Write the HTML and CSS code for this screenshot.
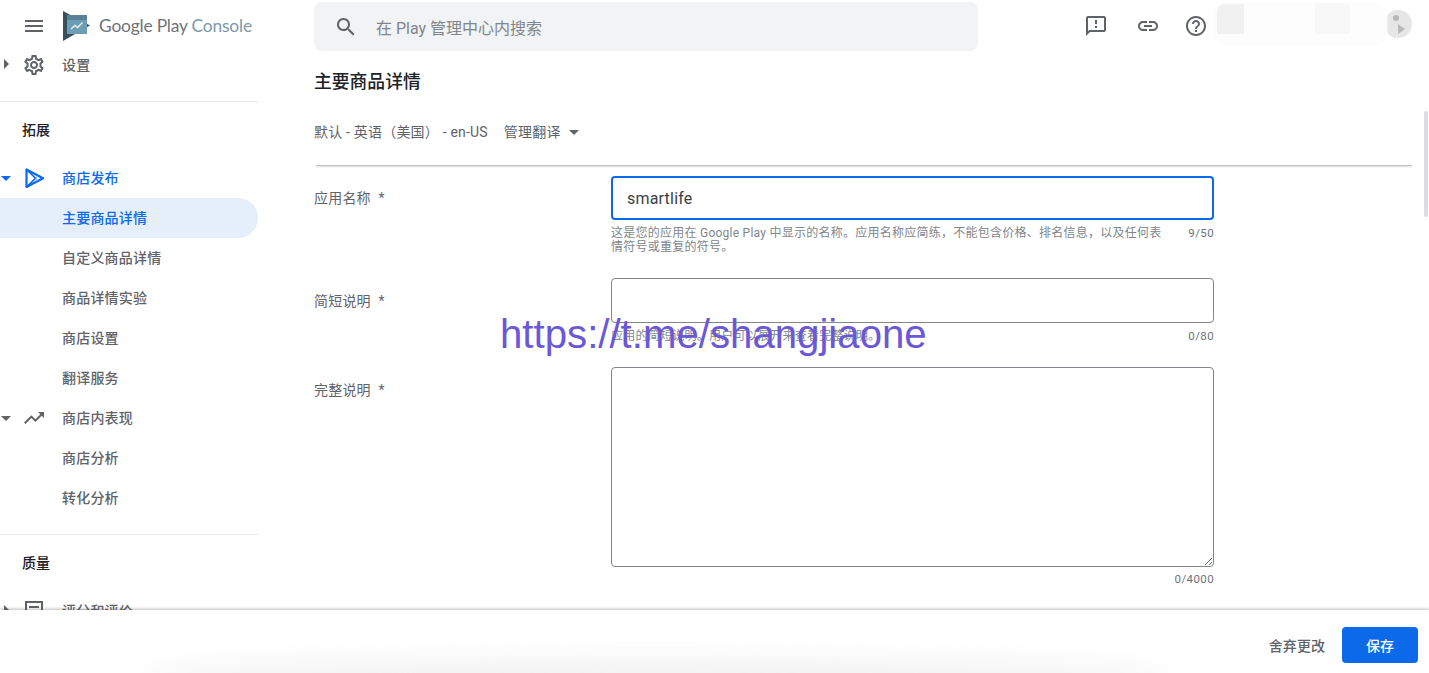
FILE: index.html
```html
<!DOCTYPE html>
<html lang="zh-CN">
<head>
<meta charset="utf-8">
<title>Google Play Console</title>
<link rel="stylesheet" href="styles.css">
</head>
<body>
<div class="app">
  <div class="workspace">
    <aside class="sidebar">
      <div class="brand">
        <svg class="menu-icon" viewBox="0 0 24 24"><path d="M3 18h18v-2H3v2zm0-5h18v-2H3v2zm0-7v2h18V6H3z"/></svg>
        <svg class="logo" viewBox="0 0 28 32"><path fill="#37505c" d="M1 1L28 15.500 1 31z"/><path fill="#6b9db5" d="M5 5h20v19H5z"/><path fill="#5a8296" d="M5 5h20v5H5z"/><path fill="none" stroke="#e8f0f4" stroke-width="1.400" d="M9 19l4-3.500 2.500 2 5-5"/></svg>
        <span class="brand-name">Google Play <span class="brand-sub">Console</span></span>
      </div>
      <nav class="nav">
        <div class="nav-row">
          <span class="caret caret-right"></span>
          <svg class="nav-icon" viewBox="0 0 24 24"><path d="M19.430 12.980c.04-.32.07-.64.07-.98 0-.34-.03-.66-.07-.98l2.110-1.650c.19-.15.24-.42.12-.64l-2-3.460c-.09-.16-.26-.25-.44-.25-.06 0-.12.01-.17.03l-2.490 1c-.52-.4-1.080-.73-1.690-.98l-.38-2.650C14.460 2.180 14.250 2 14 2h-4c-.25 0-.46.18-.49.42l-.38 2.650c-.61.25-1.170.59-1.690.98l-2.490-1c-.06-.02-.12-.03-.18-.03-.17 0-.34.09-.43.25l-2 3.460c-.13.22-.07.49.12.64l2.110 1.650c-.04.32-.07.65-.07.98 0 .33.03.66.07.98l-2.110 1.650c-.19.15-.24.42-.12.64l2 3.460c.09.16.26.25.44.25.06 0 .12-.01.17-.03l2.490-1c.52.4 1.080.73 1.690.98l.38 2.650c.03.24.24.42.49.42h4c.25 0 .46-.18.49-.42l.38-2.650c.61-.25 1.170-.59 1.690-.98l2.490 1c.06.02.12.03.18.03.17 0 .34-.09.43-.25l2-3.460c.12-.22.07-.49-.12-.64l-2.110-1.650zm-1.980-1.710c.04.31.05.52.05.73 0 .21-.02.43-.05.73l-.14 1.130.89.7 1.080.84-.7 1.210-1.270-.51-1.040-.42-.9.68c-.43.32-.84.56-1.250.73l-1.060.43-.16 1.130-.2 1.350h-1.400l-.19-1.350-.16-1.130-1.060-.43c-.43-.18-.83-.41-1.230-.71l-.91-.7-1.060.43-1.270.51-.7-1.210 1.080-.84.89-.7-.14-1.130c-.03-.31-.05-.54-.05-.74s.02-.43.05-.73l.14-1.130-.89-.7-1.080-.84.7-1.210 1.270.51 1.040.42.9-.68c.43-.32.84-.56 1.250-.73l1.060-.43.16-1.130.2-1.350h1.390l.19 1.350.16 1.130 1.060.43c.43.18.83.41 1.230.71l.91.7 1.060-.43 1.270-.51.7 1.210-1.070.85-.89.7.14 1.130zM12 8c-2.210 0-4 1.790-4 4s1.790 4 4 4 4-1.790 4-4-1.790-4-4-4zm0 6c-1.100 0-2-.9-2-2s.9-2 2-2 2 .9 2 2-.9 2-2 2z"/></svg>
          <span class="nav-label">设置</span>
        </div>
        <hr class="nav-divider">
        <div class="nav-section">拓展</div>
        <div class="nav-row nav-row-active">
          <span class="caret caret-down caret-blue"></span>
          <svg class="nav-icon-play" viewBox="0 0 30 30"><path d="M6.500 6.500V24L23 15.200z" fill="none" stroke="#0b69ea" stroke-width="2.200" stroke-linejoin="round"/><path d="M6.500 6.500L15.500 15.200 6.500 24" fill="none" stroke="#0b69ea" stroke-width="1.600"/><path d="M15.500 15.200L18 12.800M15.500 15.200L18 17.600" fill="none" stroke="#6fa5f0" stroke-width="1"/></svg>
          <span class="nav-label">商店发布</span>
        </div>
        <div class="nav-row nav-sub nav-sub-selected"><span class="nav-label">主要商品详情</span></div>
        <div class="nav-row nav-sub"><span class="nav-label">自定义商品详情</span></div>
        <div class="nav-row nav-sub"><span class="nav-label">商品详情实验</span></div>
        <div class="nav-row nav-sub"><span class="nav-label">商店设置</span></div>
        <div class="nav-row nav-sub"><span class="nav-label">翻译服务</span></div>
        <div class="nav-row">
          <span class="caret caret-down"></span>
          <svg class="nav-icon" viewBox="0 0 24 24"><path d="M16 6l2.290 2.290-4.880 4.880-4-4L2 16.590 3.410 18l6-6 4 4 6.300-6.290L22 12V6z"/></svg>
          <span class="nav-label">商店内表现</span>
        </div>
        <div class="nav-row nav-sub"><span class="nav-label">商店分析</span></div>
        <div class="nav-row nav-sub"><span class="nav-label">转化分析</span></div>
        <hr class="nav-divider">
        <div class="nav-section">质量</div>
        <div class="nav-row">
          <span class="caret caret-right"></span>
          <svg class="nav-icon" viewBox="0 0 24 24"><path d="M21 2H3v20h18V2zm-2 18H5V4h14v16zM7 7h10v2H7zm0 4h10v2H7z"/></svg>
          <span class="nav-label">评分和评价</span>
        </div>
      </nav>
    </aside>
    <main class="main">
      <header class="topbar">
        <div class="search">
          <svg class="search-icon" viewBox="0 0 24 24"><path d="M15.500 14h-.79l-.28-.27C15.410 12.590 16 11.110 16 9.500 16 5.910 13.090 3 9.500 3S3 5.910 3 9.500 5.910 16 9.500 16c1.610 0 3.090-.59 4.230-1.570l.27.28v.79l5 4.990L20.490 19l-4.990-5zm-6 0C7.010 14 5 11.990 5 9.500S7.010 5 9.500 5 14 7.010 14 9.500 11.990 14 9.500 14z"/></svg>
          <span class="search-text">在 Play 管理中心内搜索</span>
        </div>
        <div class="top-actions">
          <svg class="top-icon" viewBox="0 0 24 24"><path d="M20 2H4c-1.100 0-1.990.9-1.990 2L2 22l4-4h14c1.100 0 2-.9 2-2V4c0-1.100-.9-2-2-2zm0 14H5.170L4 17.170V4h16v12zm-9-4h2v2h-2zm0-6h2v4h-2z"/></svg>
          <svg class="top-icon top-icon-link" viewBox="0 0 24 24"><path d="M3.900 12c0-1.710 1.390-3.100 3.100-3.100h4V7H7c-2.760 0-5 2.240-5 5s2.240 5 5 5h4v-1.900H7c-1.710 0-3.100-1.390-3.100-3.100zM8 13h8v-2H8v2zm9-6h-4v1.900h4c1.710 0 3.100 1.390 3.100 3.100s-1.390 3.100-3.100 3.100h-4V17h4c2.760 0 5-2.240 5-5s-2.240-5-5-5z"/></svg>
          <svg class="top-icon" viewBox="0 0 24 24"><path d="M11 18h2v-2h-2v2zm1-16C6.480 2 2 6.480 2 12s4.480 10 10 10 10-4.480 10-10S17.520 2 12 2zm0 18c-4.410 0-8-3.590-8-8s3.590-8 8-8 8 3.590 8 8-3.590 8-8 8zm0-14c-2.210 0-4 1.790-4 4h2c0-1.100.9-2 2-2s2 .9 2 2c0 2-3 1.750-3 5h2c0-2.250 3-2.500 3-5 0-2.210-1.790-4-4-4z"/></svg>
        </div>
      </header>
      <div class="content">
        <section class="sticky-head">
          <h1 class="page-title">主要商品详情</h1>
          <div class="lang-row">
            <span>默认 - 英语（美国） - en-US</span>
            <span class="lang-manage">管理翻译<span class="caret caret-down caret-inline"></span></span>
          </div>
        </section>
        <form class="form">
          <div class="field field-name">
            <label class="field-label">应用名称 <span class="req">*</span></label>
            <div class="field-body">
              <div class="input input-focus">smartlife</div>
              <div class="hint-row">
                <p class="hint">这是您的应用在 Google Play 中显示的名称。应用名称应简练，不能包含价格、排名信息，以及任何表情符号或重复的符号。</p>
                <span class="count">9/50</span>
              </div>
            </div>
          </div>
          <div class="field field-short">
            <label class="field-label">简短说明 <span class="req">*</span></label>
            <div class="field-body">
              <div class="input"></div>
              <div class="hint-row">
                <p class="hint">应用的简短说明。用户可以展开来查看完整说明。</p>
                <span class="count">0/80</span>
              </div>
            </div>
          </div>
          <div class="field field-full">
            <label class="field-label">完整说明 <span class="req">*</span></label>
            <div class="field-body">
              <div class="textarea">
                <svg class="grip" viewBox="0 0 8 8"><path d="M1 8l7-7M5 8l3-3" stroke="#5f6368" stroke-width="1" fill="none"/></svg>
              </div>
              <div class="hint-row"><p class="hint"></p><span class="count">0/4000</span></div>
            </div>
          </div>
        </form>
      </div>
      <div class="scroll-thumb"></div>
    </main>
  </div>
  <footer class="footer">
    <span class="discard">舍弃更改</span>
    <button class="save" type="button">保存</button>
  </footer>
  <svg class="avatar" viewBox="0 0 28 32"><circle cx="14" cy="16" r="14" fill="#e6e6e6"/><circle cx="12" cy="10" r="3" fill="#b8b8b8"/><path d="M14 16l7 5-7 5z" fill="#b8b8b8"/></svg>
  <div class="redact"><span class="redact-a"></span><span class="redact-b"></span></div>
  <div class="footer-smear"></div>
  <div class="watermark">https://t.me/shangjiaone</div>
</div>
</body>
</html>
```
FILE: styles.css
```css
* { box-sizing: border-box; }
html, body { margin: 0; height: 100%; }
body {
  background: #fff;
  color: #5f6368;
  font-family: Roboto, "Noto Sans CJK SC", sans-serif;
  font-size: 14px;
  overflow: hidden;
}
.app {
  position: relative;
  width: 1429px;
  height: 673px;
  display: flex;
  flex-direction: column;
  overflow: hidden;
}
.workspace { flex: 1; min-height: 0; display: flex; overflow: hidden; }

/* Sidebar */
.sidebar { width: 258px; flex: none; overflow: hidden; }
.brand { height: 45px; padding: 6px 0 0 22px; display: flex; align-items: center; }
.menu-icon { width: 24px; height: 24px; fill: #5f6368; flex: none; }
.logo { width: 28px; height: 32px; margin-left: 16px; flex: none; }
.brand-name { margin-left: 9px; font: 400 17.400px/1 Lato, sans-serif; letter-spacing: -0.2px; color: #6f7376; white-space: nowrap; }
.brand-sub { color: #7b99a8; }
.nav { display: flex; flex-direction: column; }
.nav-row { position: relative; flex: none; height: 40px; display: flex; align-items: center; padding-left: 62px; letter-spacing: 0.2px; }
.nav-label { font-weight: 500; font-size: 14px; white-space: nowrap; position: relative; top: -1px; }
.nav-icon { position: absolute; left: 22px; top: 8px; width: 24px; height: 24px; fill: #5f6368; }
.nav-icon-play { position: absolute; left: 20px; top: 5px; width: 30px; height: 30px; }
.caret { display: inline-block; width: 0; height: 0; }
.caret-right { position: absolute; left: 4px; top: 14px; border-left: 5px solid #5f6368; border-top: 5px solid transparent; border-bottom: 5px solid transparent; }
.caret-down { position: absolute; left: 1px; top: 18px; border-top: 5px solid #5f6368; border-left: 5px solid transparent; border-right: 5px solid transparent; }
.caret-blue { border-top-color: #0b69ea; }
.caret-inline { position: static; margin-left: 8px; vertical-align: 2px; }
.nav-row-active { color: #0b69ea; }
.nav-sub-selected { color: #0b69ea; background: #e5effc; border-radius: 0 20px 20px 0; }
.nav-divider { margin: 16px 0 0; height: 1px; border: 0; background: #e8eaed; }
.nav-section { flex: none; height: 56px; padding: 0 0 2px 22px; display: flex; align-items: center; font-weight: 500; font-size: 14px; color: #202124; }

/* Top bar */
.main { position: relative; flex: 1; min-width: 0; display: flex; flex-direction: column; overflow: hidden; }
.topbar { flex: none; height: 56px; display: flex; padding: 2px 0 0 56px; }
.search { width: 664px; height: 49px; background: #f1f3f4; border-radius: 8px; display: flex; align-items: center; padding-left: 20px; }
.search-icon { width: 24px; height: 24px; fill: #5f6368; flex: none; }
.search-text { margin-left: 18px; font-size: 16px; color: #80868b; white-space: nowrap; }
.top-actions { display: flex; gap: 24px; margin-left: 106px; padding-top: 12px; }
.top-icon { width: 24px; height: 24px; fill: #5f6368; }
.top-icon-link { margin-left: 4px; }

/* Content */
.content { flex: 1; min-height: 0; padding-left: 56px; overflow: hidden; }
.sticky-head { width: 1100px; height: 109px; padding-top: 14px; box-shadow: 0 3px 2px -2px rgba(60, 64, 67, .45); }
.page-title { margin: 0; font-size: 17.800px; line-height: 24px; font-weight: 500; color: #202124; }
.lang-row { margin-top: 28px; line-height: 20px; display: flex; gap: 16px; color: #5f6368; white-space: nowrap; letter-spacing: 0.2px; }
.lang-manage { display: inline-flex; align-items: center; }

/* Form */
.form { display: flex; flex-direction: column; }
.field { display: flex; }
.field-name { margin-top: 11px; }
.field-short { margin-top: 24px; }
.field-full { margin-top: 24px; }
.field-label { width: 297px; flex: none; padding-top: 13px; line-height: 20px; letter-spacing: 0.2px; }
.field-name .field-label { padding-top: 12px; }
.req { margin-left: 4px; }
.field-body { width: 603px; flex: none; }
.input { height: 45px; border: 1px solid #80868b; border-radius: 4px; padding: 0 15px; display: flex; align-items: center; font-size: 16px; letter-spacing: 0.2px; color: #3c4043; }
.input-focus { height: 44px; border: 2px solid #0b69ea; padding: 0 14px; }
.textarea { position: relative; height: 200px; border: 1px solid #80868b; border-radius: 4px; }
.grip { position: absolute; right: 1px; bottom: 1px; width: 8px; height: 8px; }
.hint-row { display: flex; justify-content: space-between; padding-top: 6px; }
.textarea + .hint-row { padding-top: 5px; }
.hint { margin: 0; width: 556px; font-size: 12px; line-height: 14px; color: #80868b; letter-spacing: 0.25px; }
.count { font-size: 11.500px; line-height: 14px; color: #6f7478; letter-spacing: 0.4px; white-space: nowrap; flex: none; }
.scroll-thumb { position: absolute; right: 1px; top: 111px; width: 4px; height: 106px; border-radius: 2px; background: #dcdce4; }

/* Footer */
.footer { position: relative; flex: none; height: 63px; background: #fff; box-shadow: 0 -1px 3px rgba(60, 64, 67, .35); display: flex; align-items: center; justify-content: flex-end; gap: 17px; padding: 7px 11px 0 0; }
.discard { font-weight: 500; font-size: 14px; letter-spacing: 0.05px; color: #5f6368; }
.save { width: 76px; height: 36px; background: #0b69ea; color: #fff; border: 0; border-radius: 4px; font: 500 14px Roboto, "Noto Sans CJK SC", sans-serif; }

/* Overlays */
.avatar { position: absolute; left: 1384px; top: 8px; width: 28px; height: 32px; }
.redact { position: absolute; left: 1213px; top: 2px; width: 174px; height: 44px; background: #fdfdfd; border-radius: 12px; box-shadow: 0 2px 3px #fff; }
.redact-a { position: absolute; left: 4px; top: 2px; width: 27px; height: 30px; background: #f1f1f1; border-radius: 8px 0 0 0; }
.redact-b { position: absolute; left: 102px; top: 1px; width: 35px; height: 31px; background: #f8f8f8; }
.footer-smear { position: absolute; left: 140px; right: 260px; bottom: -24px; height: 36px; background: #f0f0f0; filter: blur(14px); border-radius: 50%; }
.watermark { position: absolute; left: 500px; top: 311px; font: 400 40.200px/48px "Liberation Sans", sans-serif; color: #6a58d8; white-space: nowrap; }
```
